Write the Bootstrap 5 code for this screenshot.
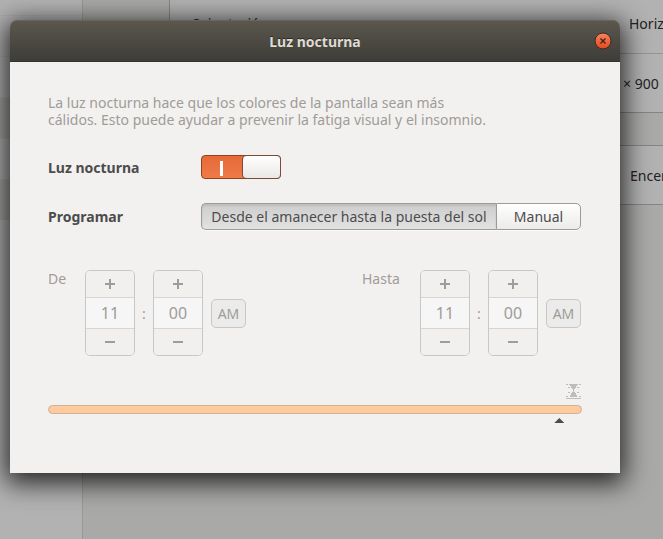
<!DOCTYPE html>
<html lang="es">
<head>
<meta charset="utf-8">
<meta name="viewport" content="width=device-width, initial-scale=1">
<title>Luz nocturna</title>
<link href="https://cdn.jsdelivr.net/npm/bootstrap@5.3.0/dist/css/bootstrap.min.css" rel="stylesheet">
<style>
body{font:14px/17px "Noto Sans","Open Sans",sans-serif;color:#4c4c4c;background:#a9a9a7}
button,input{font:inherit;color:inherit}
.stage{min-height:100vh;overflow:hidden;color:#222}
.side{width:83px;background:#b2b2b2;border-right:1px solid #989896;padding-top:15px}
.side-row{height:41px;border-top:1px solid #acacac}
.side-row.alt{background:#a6a6a5}
.panel{margin-left:86px;background:#b2b2b2;border:1px solid #858583;border-right:0}
.panel.first{border-top:0}
.panel.second{margin-top:32px}
.setting{height:58px;padding-left:21px;white-space:nowrap}
.panel.first .setting:first-child{height:54px;padding-bottom:6px;border-bottom:1px solid #959593}
.v1{width:34px}.v2{width:40px}.v3{width:33px}
.overlay{padding:20px 43px 66px 10px}
.window{background:#f2f1f0;border-radius:7px 7px 0 0;box-shadow:0 6px 26px 4px rgba(0,0,0,.8)}
.titlebar{height:42px;border-radius:7px 7px 0 0;background:linear-gradient(#5c584f,#3d3c37);box-shadow:inset 0 1px #69655a,inset 0 -1px #34332f;color:#dfdbd2}
.titlebar h1{font-size:14px;line-height:17px;font-weight:700;text-shadow:0 -1px #292824}
.close-btn{right:8px;width:18px;height:18px;border:0;background:none}
.content{padding:32px 38px 59px}
.dim{color:#a09c97}
.intro{max-width:460px;margin-bottom:27px}
.name{width:153px;font-weight:700}
.gsw{appearance:none;width:80px;height:24px;margin:0;border:1px solid #93401f;border-radius:4px;background:linear-gradient(#fff,#fff) 18px 5px/3px 15px no-repeat,linear-gradient(#e56a38,#ef7a48);display:block}
.switch-box::after{content:"";right:0;top:0;width:39px;height:24px;border:1px solid #7d4a35;border-radius:4px;background:linear-gradient(#fff,#e9e8e6);position:absolute;pointer-events:none}
.seg{height:27px;padding:0 8px;border:1px solid #9b9b99;background:linear-gradient(#fff,#ecebea);white-space:nowrap;box-shadow:0 1px #fafafa}
.seg.on{background:linear-gradient(#cdcdcd,#e2e2e2);border-radius:5px 0 0 5px;border-right:0;box-shadow:inset 0 2px 2px #bdbdbd,0 1px #fafafa}
.seg.last{width:85px;border-radius:0 5px 5px 0}
.edge{padding-right:1px}
.spin{width:50px;border:1px solid #c9c7c5;border-radius:5px;overflow:hidden}
.spin button{height:26px;border:0;padding:0;background:#f1f0ef;color:#a09c97}
.spin input{width:100%;height:32px;padding:0;border:solid #d6d5d4;border-width:1px 0;background:#f6f6f6;text-align:center;font-size:16px;color:#a09c97;border-radius:0}
.colon{width:18px;text-align:center}
.ampm{width:35px;height:29px;padding:0;margin-left:8px;border:1px solid #c9c7c5;border-radius:5px;background:#ecebeb;color:#a09c97}
.lab-a{width:37px}.lab-b{width:58px}
.times{margin-top:40px}
.marks{margin-top:28px;height:16px}
.scale{appearance:none;width:100%;height:9px;margin:5px 0 0;padding:0;background:#ffcb9c;border:1px solid #c9b29e;border-radius:5px;display:block}
.scale::-webkit-slider-runnable-track{height:7px}
.scale::-webkit-slider-thumb{appearance:none;width:10px;height:5px;margin-top:12px;background:#4c4c4c;clip-path:polygon(50% 0,100% 100%,0 100%)}
</style>
<script src="https://cdn.jsdelivr.net/npm/bootstrap@5.3.0/dist/js/bootstrap.bundle.min.js"></script>
</head>
<body>
<div class="position-relative">
<div class="stage d-flex">
  <aside class="side flex-shrink-0">
    <div class="side-row"></div><div class="side-row"></div><div class="side-row alt"></div><div class="side-row"></div><div class="side-row alt"></div>
  </aside>
  <main class="flex-grow-1">
    <section class="panel first">
      <div class="setting d-flex align-items-center justify-content-between"><span>Orientación</span><span class="v1">Horiz</span></div>
      <div class="setting d-flex align-items-center justify-content-end"><span class="v2">× 900</span></div>
    </section>
    <section class="panel second">
      <div class="setting d-flex align-items-center justify-content-end"><span class="v3">Encer</span></div>
    </section>
  </main>
</div>
<div class="overlay position-absolute top-0 start-0 w-100">
  <div class="window" role="dialog" aria-labelledby="title">
    <header class="titlebar d-flex align-items-center justify-content-center position-relative">
      <h1 id="title" class="m-0">Luz nocturna</h1>
      <button class="close-btn position-absolute p-0 d-flex" type="button" aria-label="Cerrar">
        <svg width="18" height="18" viewBox="0 0 18 18"><defs><linearGradient id="o" x2="0" y2="1"><stop stop-color="#f58563"/><stop offset="1" stop-color="#e2491b"/></linearGradient></defs><circle cx="9" cy="9" r="8" fill="url(#o)" stroke="#3a2a22"/><path d="M6.5 6.5l5 5M11.5 6.5l-5 5" stroke="#40201a" stroke-width="1.3"/></svg>
      </button>
    </header>
    <div class="content">
      <p class="intro dim">La luz nocturna hace que los colores de la pantalla sean más<br>cálidos. Esto puede ayudar a prevenir la fatiga visual y el insomnio.</p>
      <div class="d-flex align-items-center">
        <label class="name" for="night">Luz nocturna</label>
        <span class="switch-box position-relative"><input class="gsw" id="night" type="checkbox" role="switch" checked></span>
      </div>
      <div class="edge d-flex align-items-center mt-4">
        <span class="name flex-shrink-0" id="prog">Programar</span>
        <div class="d-flex flex-grow-1" role="group" aria-labelledby="prog">
          <button class="seg on flex-grow-1" type="button">Desde el amanecer hasta la puesta del sol</button><button class="seg last" type="button">Manual</button>
        </div>
      </div>
      <div class="times edge dim d-flex justify-content-between">
        <div class="d-flex align-items-center">
          <label class="lab-a align-self-start" for="h1">De</label>
          <div class="spin d-flex flex-column"><button class="d-flex align-items-center justify-content-center" type="button" aria-label="Más"><svg width="10" height="10"><path d="M5 0v10M0 5h10" stroke="currentColor" stroke-width="2"/></svg></button><input id="h1" value="11"><button class="d-flex align-items-center justify-content-center" type="button" aria-label="Menos"><svg width="10" height="10"><path d="M0 5h10" stroke="currentColor" stroke-width="2"/></svg></button></div>
          <span class="colon">:</span>
          <div class="spin d-flex flex-column"><button class="d-flex align-items-center justify-content-center" type="button" aria-label="Más"><svg width="10" height="10"><path d="M5 0v10M0 5h10" stroke="currentColor" stroke-width="2"/></svg></button><input aria-label="Minutos" value="00"><button class="d-flex align-items-center justify-content-center" type="button" aria-label="Menos"><svg width="10" height="10"><path d="M0 5h10" stroke="currentColor" stroke-width="2"/></svg></button></div>
          <button class="ampm" type="button">AM</button>
        </div>
        <div class="d-flex align-items-center">
          <label class="lab-b align-self-start" for="h2">Hasta</label>
          <div class="spin d-flex flex-column"><button class="d-flex align-items-center justify-content-center" type="button" aria-label="Más"><svg width="10" height="10"><path d="M5 0v10M0 5h10" stroke="currentColor" stroke-width="2"/></svg></button><input id="h2" value="11"><button class="d-flex align-items-center justify-content-center" type="button" aria-label="Menos"><svg width="10" height="10"><path d="M0 5h10" stroke="currentColor" stroke-width="2"/></svg></button></div>
          <span class="colon">:</span>
          <div class="spin d-flex flex-column"><button class="d-flex align-items-center justify-content-center" type="button" aria-label="Más"><svg width="10" height="10"><path d="M5 0v10M0 5h10" stroke="currentColor" stroke-width="2"/></svg></button><input aria-label="Minutos" value="00"><button class="d-flex align-items-center justify-content-center" type="button" aria-label="Menos"><svg width="10" height="10"><path d="M0 5h10" stroke="currentColor" stroke-width="2"/></svg></button></div>
          <button class="ampm" type="button">AM</button>
        </div>
      </div>
      <div class="marks edge d-flex justify-content-end"><svg width="15" height="16" viewBox="0 0 15 16" fill="#bdbdbd"><path d="M0 0h2v1H0zM3 0h9v1h-1v1h-1v2H9v1H8v3h1v1h1v2h1v2H4v-2h1V9h1V8h1V5H6V4H5V2H4V1H3zM13 0h2v1h-2zM2 3h2v1H2zM11 3h2v1h-2zM2 8h2v1H2zM11 8h2v1h-2zM0 12h2v1H0zM13 12h2v1h-2zM0 14h15v1H0z"/></svg></div>
      <input class="scale" type="range" min="0" max="1440" value="1394" aria-label="Hora actual">
    </div>
  </div>
</div>
</div>
</body>
</html>
